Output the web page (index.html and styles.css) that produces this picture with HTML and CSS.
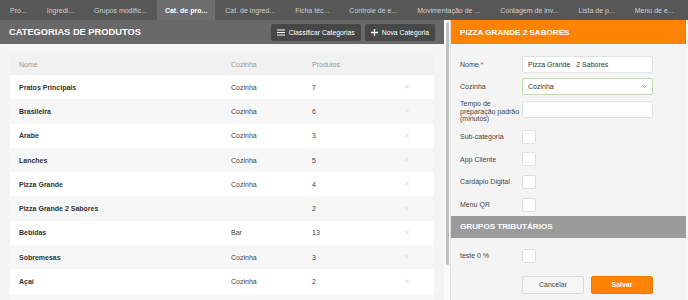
FILE: index.html
```html
<!DOCTYPE html>
<html>
<head>
<meta charset="utf-8">
<title>Categorias de produtos</title>
<link rel="stylesheet" href="styles.css">
</head>
<body>
	<nav class="tabs">
		<span class="tab">Pro...</span>
		<span class="tab">Ingredi...</span>
		<span class="tab">Grupos modific...</span>
		<span class="tab active">Cat. de pro...</span>
		<span class="tab">Cat. de ingred...</span>
		<span class="tab">Ficha téc...</span>
		<span class="tab">Controle de e...</span>
		<span class="tab">Movimentação de ...</span>
		<span class="tab">Contagem de inv...</span>
		<span class="tab">Lista de p...</span>
		<span class="tab">Menu de e...</span>
	</nav>
	<div class="main">
		<section class="list">
			<div class="list-head">
				<h1>CATEGORIAS DE PRODUTOS</h1>
				<div class="actions">
					<button class="dark-btn">
						<svg width="8" height="7" viewBox="0 0 8 7"><path d="M0 1h8M0 3.5h8M0 6h8" stroke="#fff" stroke-width="1.2"/></svg>
						Classificar Categorias
					</button>
					<button class="dark-btn">
						<svg width="7" height="7" viewBox="0 0 7 7"><path d="M3.5 0v7M0 3.5h7" stroke="#fff" stroke-width="1.3"/></svg>
						Nova Categoria
					</button>
				</div>
			</div>
			<div class="list-body">
				<div class="card">
					<div class="trow thead">
						<span>Nome</span><span>Cozinha</span><span>Produtos</span><span></span>
					</div>
					<div class="trow"><b>Pratos Principais</b><span>Cozinha</span><span>7</span><span class="del">✕</span></div>
					<div class="trow"><b>Brasileira</b><span>Cozinha</span><span>6</span><span class="del">✕</span></div>
					<div class="trow"><b>Árabe</b><span>Cozinha</span><span>3</span><span class="del">✕</span></div>
					<div class="trow"><b>Lanches</b><span>Cozinha</span><span>5</span><span class="del">✕</span></div>
					<div class="trow"><b>Pizza Grande</b><span>Cozinha</span><span>4</span><span class="del">✕</span></div>
					<div class="trow"><b>Pizza Grande 2 Sabores</b><span></span><span>2</span><span class="del">✕</span></div>
					<div class="trow"><b>Bebidas</b><span>Bar</span><span>13</span><span class="del">✕</span></div>
					<div class="trow"><b>Sobremesas</b><span>Cozinha</span><span>3</span><span class="del">✕</span></div>
					<div class="trow"><b>Açaí</b><span>Cozinha</span><span>2</span><span class="del">✕</span></div>
					<div class="trow"><b></b><span></span><span></span><span></span></div>
				</div>
			</div>
		</section>
		<div class="scroll"><div class="thumb"></div></div>
		<section class="edit">
			<h2 class="edit-head">PIZZA GRANDE 2 SABORES</h2>
			<div class="form">
				<div class="row">
					<label>Nome <i>*</i></label>
					<div class="field">Pizza Grande&nbsp;&nbsp; 2 Sabores</div>
				</div>
				<div class="row">
					<label>Cozinha</label>
					<div class="field select">Cozinha
						<svg width="5" height="3" viewBox="0 0 5 3"><path d="M0.3 0.3L2.5 2.5L4.7 0.3" fill="none" stroke="#888" stroke-width="0.8"/></svg>
					</div>
				</div>
				<div class="row tall">
					<label>Tempo de preparação padrão (minutos)</label>
					<div class="field"></div>
				</div>
				<div class="row check"><label>Sub-categoria</label><span class="box"></span></div>
				<div class="row check"><label>App Cliente</label><span class="box"></span></div>
				<div class="row check"><label>Cardápio Digital</label><span class="box"></span></div>
				<div class="row check last"><label>Menu QR</label><span class="box"></span></div>
			</div>
			<h2 class="group-head">GRUPOS TRIBUTÁRIOS</h2>
			<div class="form form-tax">
				<div class="row check"><label>teste 0 %</label><span class="box"></span></div>
				<div class="buttons">
					<button class="cancel">Cancelar</button>
					<button class="save">Salvar</button>
				</div>
			</div>
		</section>
	</div>
</body>
</html>
```

FILE: styles.css
```css
* {
	box-sizing: border-box;
	font-family: "Liberation Sans", Arial, sans-serif;
}
body {
	margin: 0;
	width: 688px;
	height: 300px;
	overflow: hidden;
	background: #f6f6f6;
}

/* tabs */
.tabs {
	display: flex;
	height: 20px;
	background: #575757;
	overflow: hidden;
	white-space: nowrap;
}
.tab {
	display: flex;
	align-items: center;
	padding: 0 10px;
	font-size: 7px;
	color: #cfcfcf;
}
.tab.active {
	background: #6e6e6e;
	color: #fff;
	font-weight: bold;
	padding: 0 8px;
}

.main {
	display: flex;
	height: 280px;
}

/* left list */
.list {
	width: 444px;
	display: flex;
	flex-direction: column;
}
.list-head {
	height: 24px;
	background: #686868;
	display: flex;
	align-items: center;
	justify-content: space-between;
	padding: 0 9px;
}
h1 {
	margin: 0;
	color: #fff;
	font-size: 9.3px;
	font-weight: bold;
}
.actions {
	display: flex;
	gap: 4px;
}
.dark-btn {
	height: 17px;
	display: flex;
	align-items: center;
	gap: 4px;
	border: 0;
	border-radius: 2px;
	background: #474747;
	color: #fff;
	font-size: 6.8px;
	padding: 0 6px;
}
.list-body {
	flex: 1;
	background: #f4f4f4;
	padding: 9px 10px 0 10px;
	overflow: hidden;
}
.card {
	background: #fff;
	border-radius: 3px;
	overflow: hidden;
}
.trow {
	display: grid;
	grid-template-columns: 212px 81px 1fr 30px;
	align-items: center;
	height: 24.3px;
	padding-left: 9px;
	font-size: 7px;
	color: #444;
}
.trow:nth-child(odd) {
	background: #f7f7f7;
}
.trow b {
	color: #333;
}
.trow.thead {
	height: 22px;
	background: #f1f1f1;
	color: #9a9a9a;
}
.del {
	color: #e2e2e2;
	font-size: 7px;
}

/* fake scrollbar */
.scroll {
	width: 7px;
	background: #fafafa;
	border-right: 1px solid #e0e0e0;
	padding: 2px 0 0 2px;
}
.thumb {
	width: 3px;
	height: 243px;
	border-radius: 2px;
	background: #c1c1c1;
}

/* right edit panel */
.edit {
	flex: 1;
	margin-right: 2px;
	background: #f4f4f4;
}
.edit-head {
	margin: 0;
	height: 24px;
	display: flex;
	align-items: center;
	padding-left: 9px;
	background: #ff8300;
	color: #fff;
	font-size: 8.1px;
	font-weight: bold;
}
.group-head {
	margin: 0;
	height: 22px;
	display: flex;
	align-items: center;
	padding-left: 9px;
	background: #9b9b9b;
	color: #fff;
	font-size: 8.1px;
	font-weight: bold;
}
.form {
	padding: 12px 0 0 9px;
}
.row {
	display: flex;
	align-items: center;
	margin-bottom: 5px;
}
.row label {
	width: 62px;
	font-size: 7px;
	color: #444;
	line-height: 7.6px;
}
.row label i {
	color: #e33;
	font-style: normal;
}
.field {
	width: 131px;
	height: 17px;
	background: #fff;
	border: 1px solid #e2e2e2;
	border-radius: 2px;
	display: flex;
	align-items: center;
	padding: 0 5px;
	font-size: 7px;
	color: #333;
}
.select {
	border-color: #b9e0ab;
	justify-content: space-between;
}
.row.tall {
	align-items: flex-start;
	margin-bottom: 7px;
}
.row.tall .field {
	margin-top: 1px;
}
.row.check {
	margin-bottom: 8.7px;
}
.row.check.last {
	margin-bottom: 4px;
}
.box {
	width: 14px;
	height: 14px;
	background: #fff;
	border: 1px solid #dedede;
	border-radius: 2px;
}
.form-tax {
	padding-top: 11px;
}
.form-tax .row.check {
	margin-bottom: 13px;
}
.buttons {
	display: flex;
	gap: 7px;
	margin-left: 62px;
}
.buttons button {
	width: 62px;
	height: 18px;
	border-radius: 2px;
	font-size: 7px;
}
.cancel {
	background: #f6f6f6;
	border: 1px solid #dcdcdc;
	color: #444;
}
.save {
	background: #ff8300;
	border: 1px solid #f07a00;
	color: #fff;
	font-weight: bold;
}
```
